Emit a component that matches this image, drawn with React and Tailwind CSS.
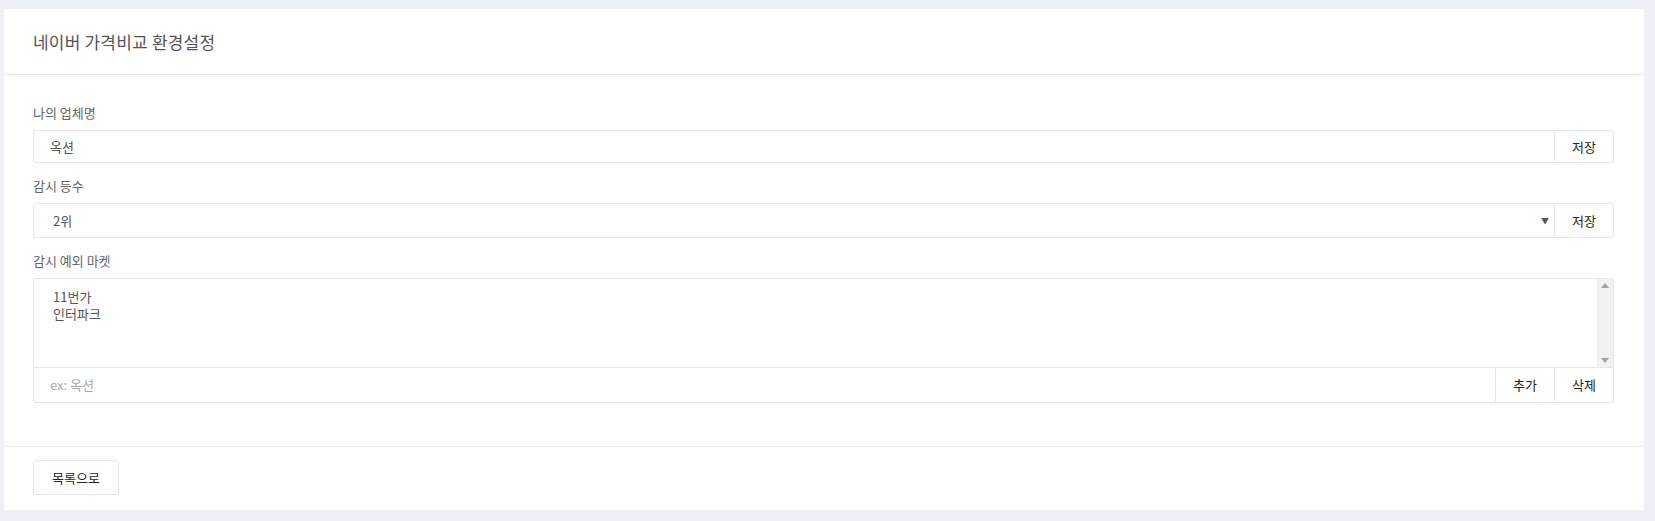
import React from 'react';

const font = { fontFamily: '"Noto Sans CJK KR", "Noto Sans", sans-serif' };

const AddonButton = ({ children, className = '' }) => (
  <button className={`w-[59px] shrink-0 bg-white border border-[#e6e7eb] text-[13px] text-[#222] flex items-center justify-center ${className}`}>
    {children}
  </button>
);

const Label = ({ children }) => (
  <div className="h-[18px] leading-[18px] text-[13px] text-[#666] mb-[8px]">{children}</div>
);

export default function App() {
  return (
    <div className="w-full h-[521px] bg-[#eef0f7] pt-[9px] pl-[4px] pr-[11px]" style={font}>
      <div className="bg-white h-[501px] flex flex-col">
        {/* header */}
        <div className="h-[66px] border-b border-[#e9eaee] px-[29px] flex items-center">
          <h1 className="text-[17px] text-[#555] tracking-[0.2px]">네이버 가격비교 환경설정</h1>
        </div>

        {/* body */}
        <div className="pl-[29px] pr-[30px] pt-[29px] h-[371px]">
          <Label>나의 업체명</Label>
          <div className="flex h-[33px]">
            <div className="flex-1 border border-[#e6e7eb] rounded-l-[3px] flex items-center pl-[16px] text-[13px] text-[#555]">옥션</div>
            <AddonButton className="border-l-0 rounded-r-[3px]">저장</AddonButton>
          </div>

          <div className="mt-[14px]">
            <Label>감시 등수</Label>
          </div>
          <div className="flex h-[35px]">
            <div className="flex-1 border border-[#e6e7eb] rounded-l-[3px] flex items-center justify-between pl-[19px] pr-[5px] text-[13px] text-[#555]">
              <span>2위</span>
              <span className="text-[8px] text-[#555] leading-none">▼</span>
            </div>
            <AddonButton className="border-l-0 rounded-r-[3px]">저장</AddonButton>
          </div>

          <div className="mt-[14px]">
            <Label>감시 예외 마켓</Label>
          </div>
          <div className="flex h-[90px] border border-[#e6e7eb] rounded-t-[3px]">
            <div className="flex-1 pl-[19px] pt-[9px] text-[13px] leading-[17px] text-[#555]">
              <div>11번가</div>
              <div>인터파크</div>
            </div>
            <div className="w-[16px] bg-[#f1f1f1] flex flex-col items-center justify-between py-[4px]">
              <svg width="8" height="5" viewBox="0 0 8 5"><path d="M0 5 L4 0 L8 5 Z" fill="#a3a3a3" /></svg>
              <svg width="8" height="5" viewBox="0 0 8 5"><path d="M0 0 L4 5 L8 0 Z" fill="#a3a3a3" /></svg>
            </div>
          </div>
          <div className="flex h-[35px]">
            <div className="flex-1 border border-t-0 border-[#e6e7eb] rounded-bl-[3px] flex items-center pl-[16px] text-[13px] text-[#a9a9a9]">ex: 옥션</div>
            <AddonButton className="border-l-0 border-t-0">추가</AddonButton>
            <AddonButton className="border-l-0 border-t-0 rounded-br-[3px]">삭제</AddonButton>
          </div>
        </div>

        {/* footer */}
        <div className="border-t border-[#e9eaee] px-[29px] pt-[13px]">
          <button className="w-[86px] h-[35px] border border-[#e6e7eb] rounded-[3px] bg-white text-[13px] text-[#222] flex items-center justify-center">목록으로</button>
        </div>
      </div>
    </div>
  );
}
